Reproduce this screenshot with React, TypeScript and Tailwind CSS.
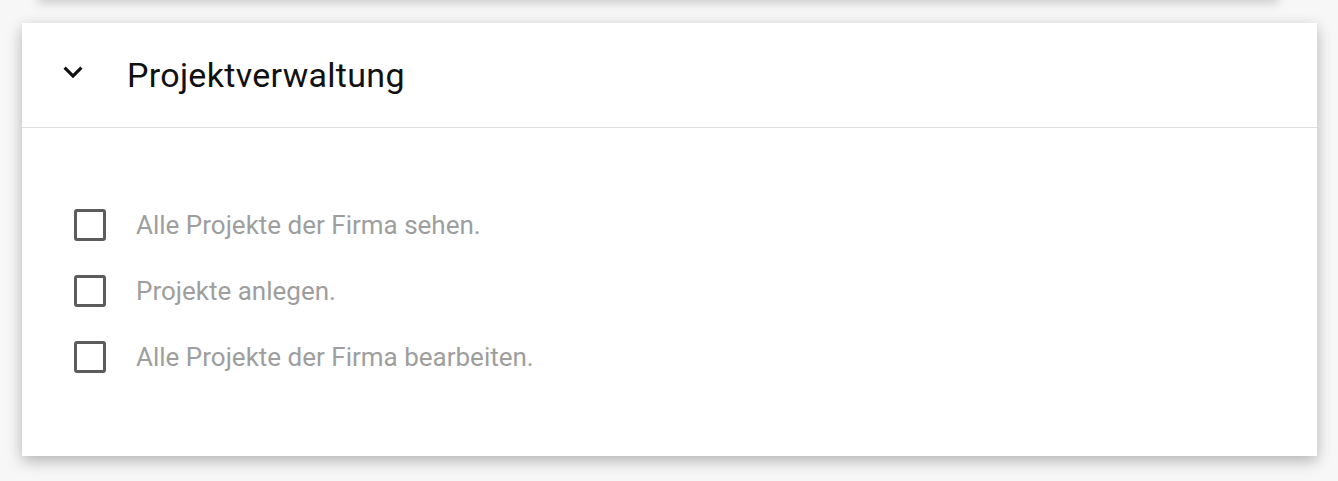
import React from "react";

const items = [
  "Alle Projekte der Firma sehen.",
  "Projekte anlegen.",
  "Alle Projekte der Firma bearbeiten.",
];

export default function App() {
  return (
    <div
      className="flex flex-col h-[481px] w-[1338px] overflow-hidden bg-[#f7f7f7]"
      style={{ fontFamily: "Roboto, 'Noto Sans', sans-serif" }}
    >
      <div className="h-[40px] -mt-[40px] ml-[38px] mr-[60px] bg-white shadow-[0_3px_10px_rgba(0,0,0,0.18)] shrink-0" />
      <div className="mt-[23px] ml-[22px] mr-[21px] bg-white shadow-[0_5px_14px_rgba(0,0,0,0.28)] shrink-0">
        <div className="h-[105px] border-b border-[#e0e0e0] flex items-center">
          <svg
            viewBox="0 0 24 24"
            className="w-[38px] h-[38px] ml-[32px] -mt-[6px] text-[#111] shrink-0"
            fill="currentColor"
          >
            <path d="M16.59 8.59L12 13.17 7.41 8.59 6 10l6 6 6-6z" />
          </svg>
          <span className="ml-[35px] text-[34px] tracking-[0.3px] text-[#111] leading-none">
            Projektverwaltung
          </span>
        </div>
        <div className="pt-[64px] pb-[66px] flex flex-col">
          {items.map((t) => (
            <div key={t} className="h-[66px] flex items-center">
              <div className="ml-[52px] w-[32px] h-[32px] border-[3px] border-[#5c5c5c] rounded-[3px] shrink-0" />
              <span className="ml-[30px] text-[26px] text-[#9e9e9e] leading-none">
                {t}
              </span>
            </div>
          ))}
        </div>
      </div>
    </div>
  );
}
